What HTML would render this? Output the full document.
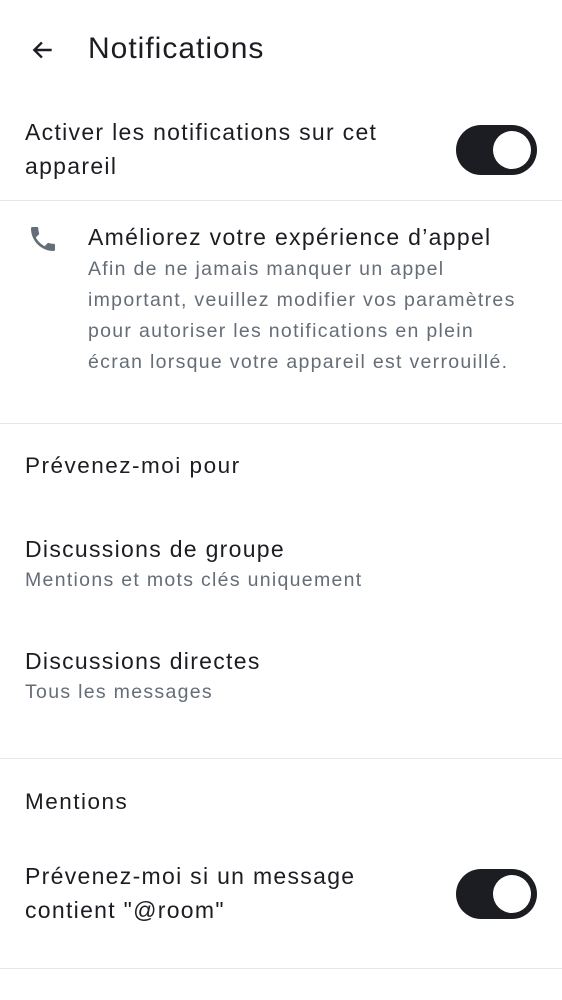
<!DOCTYPE html>
<html><head><meta charset="utf-8"><style>
*{margin:0;padding:0;box-sizing:border-box}
body{width:562px;height:1000px;background:#fff;font-family:"Liberation Sans",sans-serif;color:#1b1d22;position:relative;overflow:hidden}
.a{position:absolute;white-space:nowrap}
.t{font-size:23px;letter-spacing:1.3px;line-height:34px}
.s{font-size:19.5px;letter-spacing:1.3px;color:#656d77;line-height:31px}
.h{font-size:22.5px;letter-spacing:1.5px;font-weight:500}
.hr{position:absolute;left:0;width:562px;height:1px;background:#e3e6ea}
.tg{position:absolute;left:456px;width:81px;height:50px;border-radius:25px;background:#1b1d22}
.tg:after{content:"";position:absolute;right:6px;top:6px;width:38px;height:38px;border-radius:50%;background:#fff}
</style></head><body>
<svg class="a" style="left:30px;top:37px" width="26" height="26" viewBox="0 0 24 24"><path d="M20 12H5M11 5l-7 7 7 7" fill="none" stroke="#1b1d22" stroke-width="2.2"/></svg>
<div class="a" style="left:88px;top:30px;font-size:30px;letter-spacing:1px;font-weight:500;line-height:38px">Notifications</div>
<div class="a t" style="left:25px;top:115px">Activer les notifications sur cet<br>appareil</div>
<div class="tg" style="top:125px"></div>
<div class="hr" style="top:200px"></div>
<svg class="a" style="left:27px;top:223px" width="32" height="32" viewBox="0 0 24 24"><path fill="#656d77" d="M6.6 10.8c1.4 2.8 3.8 5.1 6.6 6.6l2.2-2.2c.3-.3.7-.4 1-.2 1.1.4 2.3.6 3.6.6.6 0 1 .4 1 1V20c0 .6-.4 1-1 1C10.6 21 3 13.4 3 4c0-.6.4-1 1-1h3.5c.6 0 1 .4 1 1 0 1.3.2 2.5.6 3.6.1.3 0 .7-.2 1z"/></svg>
<div class="a t" style="left:88px;top:220px">Améliorez votre expérience d’appel</div>
<div class="a s" style="left:88px;top:254px">Afin de ne jamais manquer un appel<br>important, veuillez modifier vos paramètres<br>pour autoriser les notifications en plein<br>écran lorsque votre appareil est verrouillé.</div>
<div class="hr" style="top:423px"></div>
<div class="a h" style="left:25px;top:453px">Prévenez-moi pour</div>
<div class="a t" style="left:25px;top:532px">Discussions de groupe</div>
<div class="a s" style="left:25px;top:565px">Mentions et mots clés uniquement</div>
<div class="a t" style="left:25px;top:644px">Discussions directes</div>
<div class="a s" style="left:25px;top:677px">Tous les messages</div>
<div class="hr" style="top:758px"></div>
<div class="a h" style="left:25px;top:789px">Mentions</div>
<div class="a t" style="left:25px;top:859px">Prévenez-moi si un message<br>contient "@room"</div>
<div class="tg" style="top:869px"></div>
<div class="hr" style="top:968px"></div>
</body></html>
